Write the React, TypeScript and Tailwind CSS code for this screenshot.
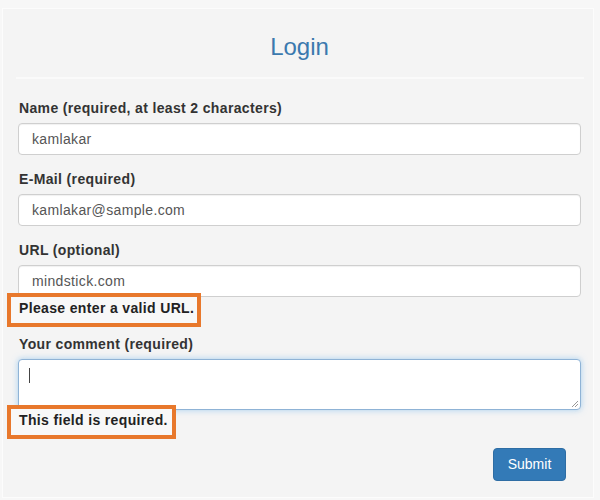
import React from "react";

type Field = {
  label: string;
  value: string;
};

const fields: Field[] = [
  { label: "Name (required, at least 2 characters)", value: "kamlakar" },
  { label: "E-Mail (required)", value: "kamlakar@sample.com" },
  { label: "URL (optional)", value: "mindstick.com" },
];

// orange annotation box drawn over the validation message
function ErrorNote({ text, width }: { text: string; width: string }) {
  return (
    <div className="relative h-5 text-[14px] font-bold leading-5 tracking-[0.35px] text-[#222]">
      <div
        className={`absolute -left-[11px] -top-[5px] h-[34px] ${width} border-4 border-[#e8782c] bg-[#f8f8f8]`}
      />
      <span className="relative pl-px">{text}</span>
    </div>
  );
}

export default function App(): React.ReactElement {
  return (
    <div
      className="h-[500px] w-[600px] bg-[#f7f7f7] pl-[2px] pt-2"
      style={{ fontFamily: '"Liberation Sans", Arial, sans-serif' }}
    >
      <div className="h-[490px] w-[592px] border border-[#fcfcfc] bg-[#f4f4f4] pl-[15px] pr-[12px]">
        <h1 className="pt-[21px] text-center text-[24px] font-normal leading-[34px] text-[#3b79ae]">
          Login
        </h1>
        <div className="mt-[13px] -ml-[2px] h-[2px] w-[568px] bg-[#fafafa]" />

        <div className="mt-[19px] tracking-[0.35px]">
          {fields.map((f, i) => (
            <div key={f.label} className={i < 2 ? "mb-[14px]" : ""}>
              <label className="mb-[5px] block h-5 pl-px text-[14px] font-bold leading-5 text-[#333]">
                {f.label}
              </label>
              <div className="flex h-[32px] items-center rounded-[4px] border border-[#cfcfcf] bg-white px-[13px] text-[14px] text-[#555] shadow-[inset_0_1px_1px_rgba(0,0,0,0.06)]">
                {f.value}
              </div>
            </div>
          ))}
          <div className="mt-px">
            <ErrorNote text="Please enter a valid URL." width="w-[194px]" />
          </div>

          <div className="mt-[16px]">
            <label className="mb-[5px] block h-5 pl-px text-[14px] font-bold leading-5 text-[#333]">
              Your comment (required)
            </label>
            <div className="relative h-[51px] rounded-[4px] border border-[#8fb3d6] bg-white px-[10px] pt-[6px] shadow-[0_0_6px_rgba(102,175,233,0.55)]">
              <span className="inline-block h-[15px] w-px bg-[#444]" />
              <svg
                className="absolute bottom-[1px] right-[1px]"
                width="8"
                height="8"
                viewBox="0 0 8 8"
              >
                <path d="M7 1 L1 7 M7 4 L4 7" stroke="#999" strokeWidth="1" />
              </svg>
            </div>
          </div>
          <ErrorNote text="This field is required." width="w-[169px]" />

          <div className="mt-[18px] flex justify-end pr-[15px]">
            <button className="h-[33px] w-[73px] rounded-[4px] border border-[#2e6da4] bg-[#337ab7] text-[14px] tracking-normal text-white">
              Submit
            </button>
          </div>
        </div>
      </div>
    </div>
  );
}
